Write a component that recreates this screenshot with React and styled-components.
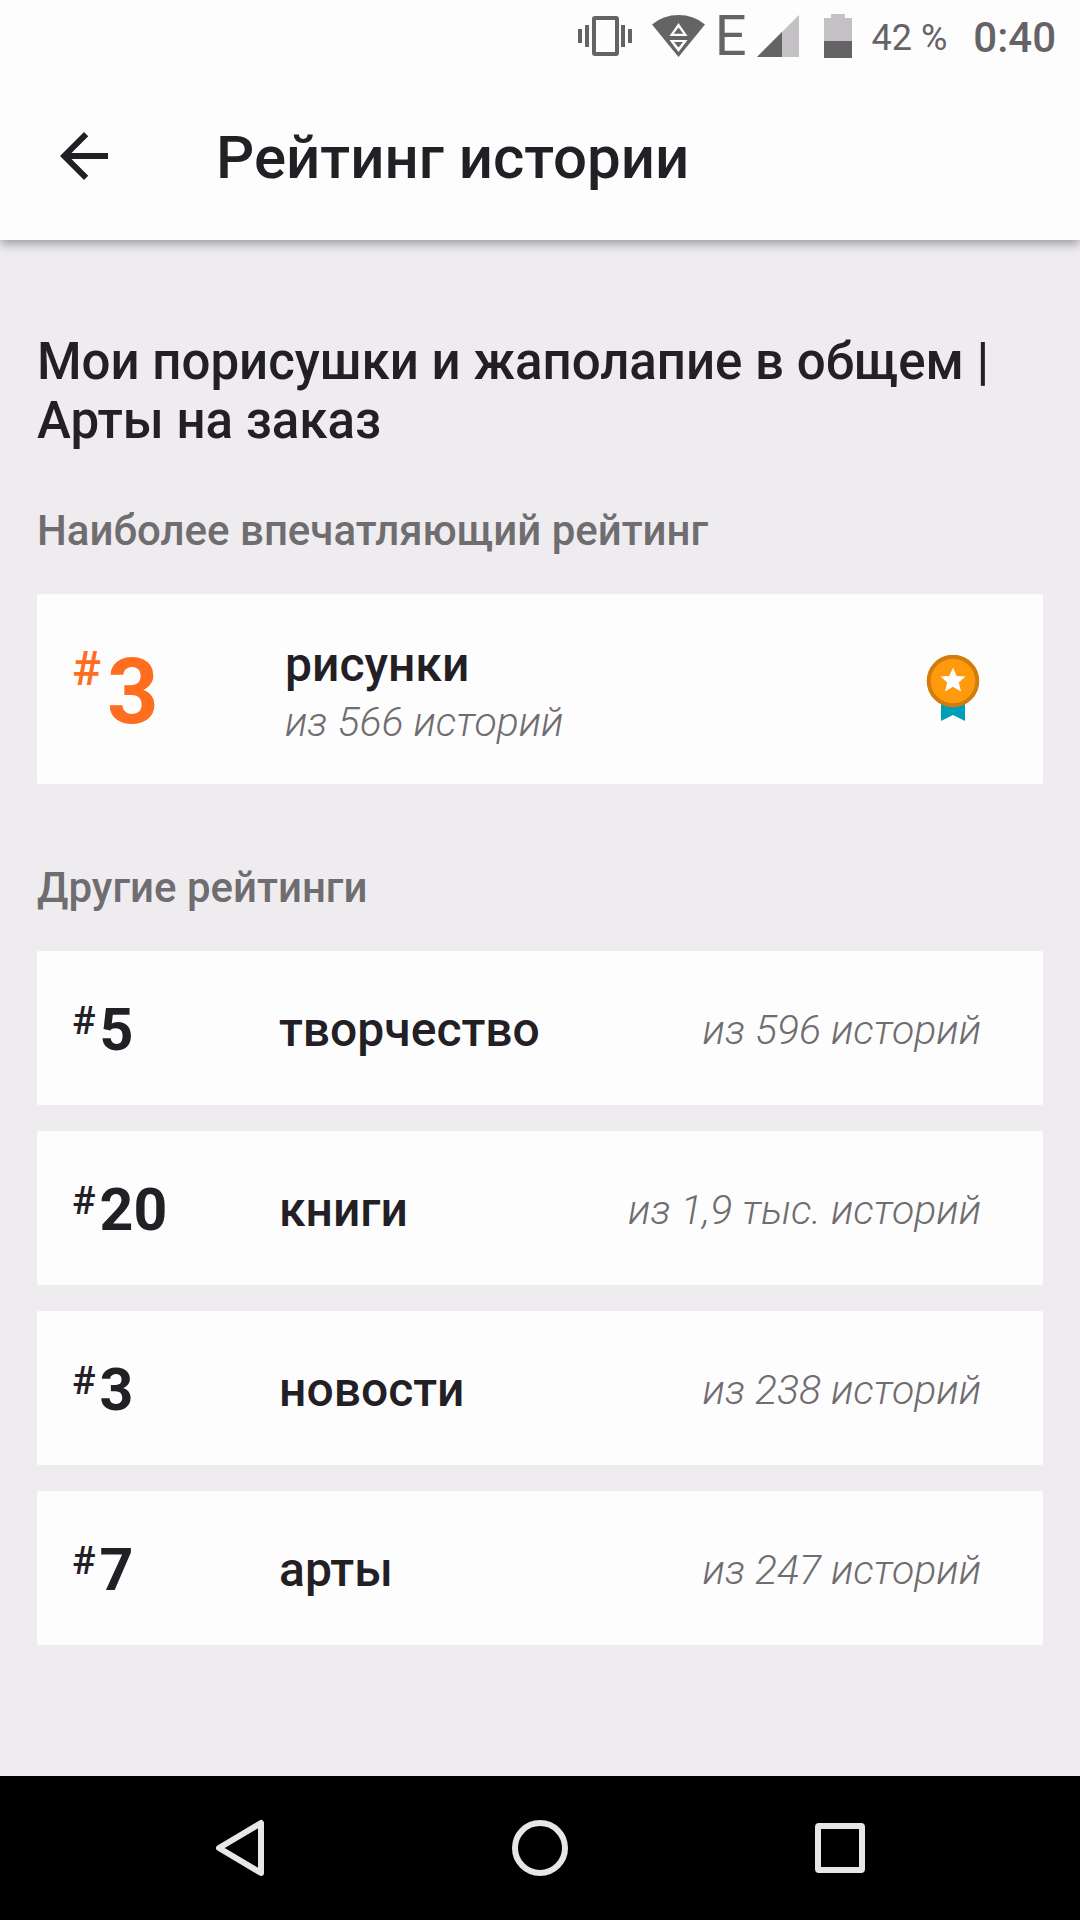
import React from 'react'
import styled, { createGlobalStyle } from 'styled-components'

const featured = { rank: 3, tag: 'рисунки', total: 'из 566 историй' }

const rankings = [
  { rank: 5, tag: 'творчество', total: 'из 596 историй' },
  { rank: 20, tag: 'книги', total: 'из 1,9 тыс. историй' },
  { rank: 3, tag: 'новости', total: 'из 238 историй' },
  { rank: 7, tag: 'арты', total: 'из 247 историй' },
]

const VibrateIcon = () => (
  <svg width='54' height='42' viewBox='0 0 54 42' fill='#656366' aria-hidden='true'>
    <rect x='16' y='3' width='23' height='36' rx='1' fill='none' stroke='#656366' strokeWidth='4' />
    <rect x='0' y='14' width='4' height='14' />
    <rect x='7' y='10' width='4' height='22' />
    <rect x='43' y='10' width='4' height='22' />
    <rect x='50' y='14' width='4' height='14' />
  </svg>
)

const WifiIcon = () => (
  <svg width='53' height='42' viewBox='0 0 53 42' aria-hidden='true'>
    <path d='M0 9.5Q11 0 26.5 0T53 9.5L26.5 42Z' fill='#656366' />
    <path d='M26.5 8L35.5 21H17.5ZM17.5 25H35.5L26.5 37Z' fill='#fefdfe' />
    <path d='M26.5 12.5L31.3 18.7H21.7ZM22 27H31L26.5 32.5Z' fill='#656366' />
  </svg>
)

const SignalIcon = () => (
  <svg width='42' height='42' viewBox='0 0 42 42' aria-hidden='true'>
    <path d='M42 0V42H0Z' fill='#c3c1c3' />
    <path d='M25 17V42H0Z' fill='#656366' />
  </svg>
)

const BatteryIcon = () => (
  <svg width='28' height='44' viewBox='0 0 28 44' aria-hidden='true'>
    <path d='M7 0H21V4H28V27H0V4H7Z' fill='#c3c1c3' />
    <path d='M0 27H28V44H0Z' fill='#656366' />
  </svg>
)

const BackIcon = () => (
  <svg width='72' height='72' viewBox='0 0 24 24' fill='#222024' aria-hidden='true'>
    <path d='M20 11H7.83l5.59-5.59L12 4l-8 8 8 8 1.41-1.41L7.83 13H20v-2z' />
  </svg>
)

const MedalIcon = () => (
  <svg width='54' height='68' viewBox='0 0 54 68' aria-hidden='true'>
    <path d='M15 44H39V66L27 60L15 66Z' fill='#009fb8' />
    <circle cx='27' cy='26' r='24.3' fill='#ff9a0c' stroke='#d17c0c' strokeWidth='4' />
    <path
      d='M27 12.5L30.6 21L39.5 21.6L32.8 27.6L35 36.5L27 31.7L19 36.5L21.2 27.6L14.5 21.6L23.4 21Z'
      fill='#fff'
    />
  </svg>
)

const Rank = ({ value, large }) => (
  <RankBox $large={large}>
    <Hash $large={large}>#</Hash>
    <Place $large={large}>{value}</Place>
  </RankBox>
)

const App = () => {
  return (
    <>
      <GlobalStyle />
      <Page>
        <Header>
          <StatusBar>
            <VibrateIcon />
            <Connection>
              <WifiIcon />
              <Network>E</Network>
              <SignalIcon />
            </Connection>
            <BatteryIcon />
            <Charge>42 %</Charge>
            <Clock>0:40</Clock>
          </StatusBar>

          <Toolbar>
            <BackButton type='button' aria-label='Назад'>
              <BackIcon />
            </BackButton>
            <Title>Рейтинг истории</Title>
          </Toolbar>
        </Header>

        <Content>
          <StoryTitle>Мои порисушки и жаполапие в общем | Арты на заказ</StoryTitle>

          <SectionTitle>Наиболее впечатляющий рейтинг</SectionTitle>
          <FeaturedCard>
            <Rank value={featured.rank} large />
            <FeaturedInfo>
              <Tag>{featured.tag}</Tag>
              <Total>{featured.total}</Total>
            </FeaturedInfo>
            <MedalIcon />
          </FeaturedCard>

          <SectionTitle>Другие рейтинги</SectionTitle>
          <RankList>
            {rankings.map((item) => (
              <RankCard key={item.tag}>
                <Rank value={item.rank} />
                <Tag>{item.tag}</Tag>
                <Total>{item.total}</Total>
              </RankCard>
            ))}
          </RankList>
        </Content>

        <NavBar>
          <NavButton type='button' aria-label='Назад'>
            <svg width='60' height='60' viewBox='0 0 60 60'>
              <path d='M51 5V55L9 30Z' />
            </svg>
          </NavButton>
          <NavButton type='button' aria-label='Домой'>
            <svg width='60' height='60' viewBox='0 0 60 60'>
              <circle cx='30' cy='30' r='25' />
            </svg>
          </NavButton>
          <NavButton type='button' aria-label='Недавние'>
            <svg width='60' height='60' viewBox='0 0 60 60'>
              <rect x='8' y='8' width='44' height='44' rx='1' />
            </svg>
          </NavButton>
        </NavBar>
      </Page>
    </>
  )
}

const GlobalStyle = createGlobalStyle`
  * {
    box-sizing: border-box;
  }
  body {
    margin: 0;
    background: #eeecef;
    color: #222024;
    font-family: Roboto, 'Noto Sans', sans-serif;
  }
  h1, h2, h3, p, ul {
    margin: 0;
    padding: 0;
  }
  button {
    padding: 0;
    border: 0;
    background: none;
    cursor: pointer;
  }
  svg {
    display: block;
    flex-shrink: 0;
  }
`

const Page = styled.div`
  display: flex;
  flex-direction: column;
  min-height: 100vh;
`

const Header = styled.header`
  background: #fefdfe;
  box-shadow: 0 4px 10px rgba(0, 0, 0, 0.35);
`

const StatusBar = styled.div`
  display: flex;
  align-items: center;
  justify-content: flex-end;
  gap: 20px;
  height: 72px;
  padding-right: 24px;
  color: #656366;
  white-space: nowrap;
`

const Connection = styled.div`
  display: flex;
  align-items: center;
  gap: 10px;
  padding-right: 5px;
`

const Network = styled.span`
  font-family: 'Liberation Sans Narrow', Roboto, sans-serif;
  font-size: 56px;
  line-height: 72px;
`

const Charge = styled.span`
  padding-top: 4px;
  font-size: 36px;
`

const Clock = styled.span`
  padding: 2px 0 0 6px;
  font-size: 42px;
  font-weight: 500;
`

const Toolbar = styled.div`
  display: flex;
  align-items: center;
  gap: 96px;
  height: 168px;
  padding: 0 48px;
`

const BackButton = styled.button`
  width: 72px;
  height: 72px;
`

const Title = styled.h1`
  padding-top: 4px;
  font-size: 60px;
  font-weight: 500;
  line-height: 72px;
`

const Content = styled.main`
  flex: 1;
  padding: 92px 37px 48px;
`

const StoryTitle = styled.h2`
  font-size: 51px;
  font-weight: 500;
  line-height: 59px;
`

const SectionTitle = styled.h3`
  margin: 55px 0 37px;
  color: #6f6d70;
  font-size: 42px;
  font-weight: 500;
  line-height: 52px;
`

const Card = styled.div`
  display: flex;
  align-items: center;
  border-radius: 2px;
  background: #fefdfe;
`

const FeaturedCard = styled(Card)`
  min-height: 190px;
  margin-bottom: 78px;
  padding: 0 63px 0 35px;
`

const FeaturedInfo = styled.div`
  flex: 1;
  padding-top: 8px;
`

const RankList = styled.ul`
  display: flex;
  flex-direction: column;
  gap: 26px;
  list-style: none;
`

const RankCard = styled(Card).attrs({ as: 'li' })`
  min-height: 154px;
  padding: 3px 62px 0 35px;
`

const RankBox = styled.div`
  display: flex;
  align-items: flex-start;
  gap: ${({ $large }) => ($large ? '6px' : '4px')};
  width: ${({ $large }) => ($large ? '213px' : '207px')};
  padding-top: ${({ $large }) => ($large ? '8px' : '0')};
  color: ${({ $large }) => ($large ? '#ff6d1e' : '#222024')};
`

const Hash = styled.span`
  font-size: ${({ $large }) => ($large ? '48px' : '39px')};
  font-weight: 500;
  line-height: 48px;
`

const Place = styled.span`
  font-size: ${({ $large }) => ($large ? '90px' : '59px')};
  font-weight: 700;
  line-height: ${({ $large }) => ($large ? '96px' : '66px')};
`

const Tag = styled.p`
  font-size: 48px;
  font-weight: 500;
  line-height: 58px;
`

const Total = styled.p`
  margin-left: auto;
  color: #6f6d70;
  font-size: 41px;
  font-style: italic;
  font-weight: 300;
  line-height: 56px;
`

const NavBar = styled.nav`
  display: flex;
  justify-content: center;
  height: 144px;
  background: #000;
`

const NavButton = styled.button`
  display: flex;
  align-items: center;
  justify-content: center;
  flex: 0 1 300px;

  svg {
    fill: none;
    stroke: #e8e6e9;
    stroke-width: 6px;
    stroke-linejoin: round;
  }
`

export default App
